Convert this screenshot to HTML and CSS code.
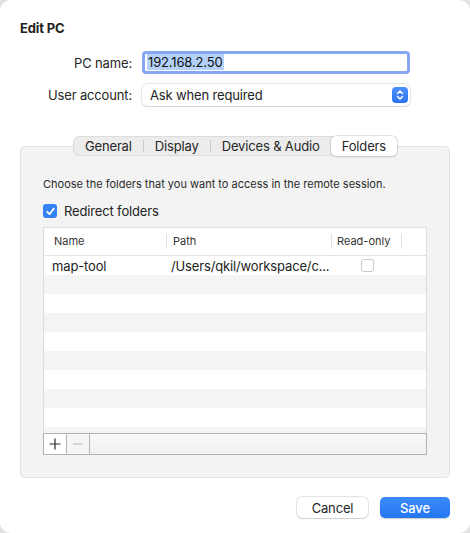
FILE: index.html
```html
<!DOCTYPE html>
<html>
<head>
<meta charset="utf-8">
<link rel="stylesheet" href="styles.css">
</head>
<body>
<div class="window">
  <h1 class="title">Edit PC</h1>
  <div class="form">
    <label class="label">PC name:</label>
    <div class="input"><span class="sel">192.168.2.50</span></div>
    <label class="label">User account:</label>
    <div class="select">
      <span>Ask when required</span>
      <span class="stepper">
        <svg width="16" height="16" viewBox="0 0 16 16"><path d="M5.5 6.5 L8 4 L10.5 6.5 M5.5 9.5 L8 12 L10.5 9.5" fill="none" stroke="#fff" stroke-width="1.5" stroke-linecap="round" stroke-linejoin="round"/></svg>
      </span>
    </div>
  </div>

  <div class="tabs">
    <div class="tab">General</div>
    <div class="sep"></div>
    <div class="tab">Display</div>
    <div class="sep"></div>
    <div class="tab">Devices &amp; Audio</div>
    <div class="tab active">Folders</div>
  </div>
  <div class="group">
    <p class="desc">Choose the folders that you want to access in the remote session.</p>
    <div class="check-row">
      <span class="checkbox">
        <svg width="13" height="13" viewBox="0 0 13 13"><path d="M3.2 6.8 L5.5 9.2 L9.8 3.6" fill="none" stroke="#fff" stroke-width="1.8" stroke-linecap="round" stroke-linejoin="round"/></svg>
      </span>
      <span>Redirect folders</span>
    </div>
    <div class="table">
      <div class="thead">
        <div class="th th-name">Name</div>
        <div class="th th-path">Path</div>
        <div class="th th-ro">Read-only</div>
        <div class="th th-rest"></div>
      </div>
      <div class="tbody">
        <div class="tr">
          <div class="td td-name">map-tool</div>
          <div class="td td-path">/Users/qkil/workspace/c...</div>
          <div class="td td-ro"><span class="cb-empty"></span></div>
          <div class="td"></div>
        </div>
        <div class="tr alt"></div>
        <div class="tr"></div>
        <div class="tr alt"></div>
        <div class="tr"></div>
        <div class="tr alt"></div>
        <div class="tr"></div>
        <div class="tr alt"></div>
        <div class="tr"></div>
        <div class="tr alt short"></div>
      </div>
      <div class="bar">
        <div class="bbtn"><svg width="12" height="12" viewBox="0 0 12 12"><path d="M6 0.5 V11.5 M0.5 6 H11.5" stroke="#2a2a2a" stroke-width="1.2"/></svg></div>
        <div class="bbtn disabled"><svg width="12" height="12" viewBox="0 0 12 12"><path d="M1 6 H11" stroke="#c4c4c4" stroke-width="1.2"/></svg></div>
        <div class="bfill"></div>
      </div>
    </div>
  </div>
  <div class="footer">
    <button class="btn">Cancel</button>
    <button class="btn primary">Save</button>
  </div>
</div>
</body>
</html>
```
FILE: styles.css
```css
html, body {
  margin: 0;
  padding: 0;
}
body {
  background: #e2e2e2;
  width: 470px;
  height: 533px;
  overflow: hidden;
  font-family: Inter, "Noto Sans", sans-serif;
  color: #222;
  letter-spacing: -0.15px;
}
.window {
  width: 470px;
  height: 533px;
  box-sizing: border-box;
  background: #fff;
  border-radius: 11px;
  padding: 21px 20px 15px 20px;
  display: flex;
  flex-direction: column;
}
.title {
  margin: 0;
  font-size: 13px;
  font-weight: 700;
  line-height: 15px;
  color: #222;
}
.form {
  margin-top: 15px;
  display: grid;
  grid-template-columns: 112px 268px;
  column-gap: 10px;
  row-gap: 10px;
  align-items: center;
}
.label {
  text-align: right;
  font-size: 13px;
  color: #262626;
}
.input {
  height: 23px;
  box-sizing: border-box;
  border: 3px solid #88a7f1;
  border-radius: 4px;
  background: #fff;
  font-size: 13px;
  line-height: 17px;
  padding-left: 2px;
}
.sel {
  background: #b4d1fb;
  color: #111;
  padding: 0 1px;
}
.select {
  height: 22px;
  box-sizing: border-box;
  border-radius: 5px;
  background: #fff;
  box-shadow: 0 0 0 0.5px #cfcfcf, 0 1px 1px rgba(0,0,0,0.12);
  font-size: 13px;
  display: flex;
  align-items: center;
  justify-content: space-between;
  padding: 0 2px 0 8px;
  color: #222;
}
.stepper {
  width: 16px;
  height: 16px;
  border-radius: 4px;
  background: linear-gradient(#4b8ffa, #2a75f3);
  display: flex;
}
.tabs {
  margin: 30px auto -10px auto;
  height: 20px;
  box-sizing: border-box;
  display: flex;
  align-items: center;
  background: #ececec;
  border: 1px solid #dcdcdc;
  border-radius: 6px;
  position: relative;
  z-index: 1;
  font-size: 13px;
  color: #262626;
}
.tab {
  padding: 0 11px;
  line-height: 18px;
}
.tab.active {
  background: #fff;
  border-radius: 5px;
  box-shadow: 0 0 0 0.5px #c4c4c4, 0 1px 2px rgba(0,0,0,0.18);
  padding: 0 11px;
  margin-right: -1px;
  height: 20px;
  line-height: 20px;
}
.sep {
  width: 1px;
  height: 12px;
  background: #cdcdcd;
}
.group {
  height: 332px;
  box-sizing: border-box;
  background: #f3f3f3;
  border: 1px solid #e2e2e2;
  border-radius: 5px;
  padding: 30px 22px 0 22px;
}
.desc {
  margin: 0;
  font-size: 11px;
  line-height: 14px;
  color: #2a2a2a;
  letter-spacing: 0;
}
.check-row {
  margin-top: 12px;
  display: flex;
  align-items: center;
  gap: 7px;
  font-size: 13px;
  height: 16px;
}
.checkbox {
  width: 14px;
  height: 14px;
  border-radius: 3px;
  background: #3483f6;
  display: flex;
  align-items: center;
  justify-content: center;
}
.table {
  margin-top: 8px;
  border: 1px solid #dedede;
  border-bottom: none;
  background: #fff;
  width: 384px;
  box-sizing: border-box;
}
.thead {
  display: grid;
  grid-template-columns: 123px 165px 70px 1fr;
  height: 27px;
  border-bottom: 1px solid #e3e3e3;
  align-items: center;
  font-size: 11px;
  color: #333;
  letter-spacing: 0;
}
.th {
  height: 15px;
  line-height: 15px;
  border-right: 1px solid #e0e0e0;
}
.th-name { padding-left: 10px; }
.th-path { padding-left: 6px; }
.th-ro { padding-left: 5px; }
.th-rest { border-right: none; }
.tr {
  display: grid;
  grid-template-columns: 123px 165px 70px 1fr;
  height: 19px;
  align-items: center;
  font-size: 13px;
  color: #222;
}
.tr.alt { background: #f4f4f4; }
.tr.short { height: 6px; }
.td-name { padding-left: 8px; }
.td-path { padding-left: 4px; white-space: nowrap; }
.td-ro {
  display: flex;
  justify-content: center;
}
.cb-empty {
  width: 13px;
  height: 13px;
  box-sizing: border-box;
  border: 1px solid #c9c9c9;
  border-radius: 3px;
  background: #fff;
}
.bar {
  display: flex;
  height: 22px;
  box-sizing: border-box;
  border: 1px solid #b2b2b2;
  margin: 0 -1px;
  background: linear-gradient(#f8f8f8, #f0f0f0);
}
.bbtn {
  width: 23px;
  border-right: 1px solid #b8b8b8;
  display: flex;
  align-items: center;
  justify-content: center;
  background: #fff;
  box-sizing: border-box;
}
.bbtn.disabled {
  background: #f6f6f6;
}
.bfill { flex: 1; }
.footer {
  margin-top: auto;
  display: flex;
  justify-content: flex-end;
  gap: 12px;
}
.btn {
  width: 71px;
  height: 21px;
  border: none;
  border-radius: 5px;
  background: #fff;
  box-shadow: 0 0 0 0.5px #c8c8c8, 0 1px 1px rgba(0,0,0,0.15);
  font-family: Inter, "Noto Sans", sans-serif;
  font-size: 13px;
  letter-spacing: -0.15px;
  color: #262626;
  padding: 0;
}
.btn.primary {
  width: 70px;
  background: linear-gradient(#3c8af9, #2477f4);
  color: #fff;
  font-weight: 500;
  box-shadow: 0 0.5px 1px rgba(0,0,0,0.2);
}
```
